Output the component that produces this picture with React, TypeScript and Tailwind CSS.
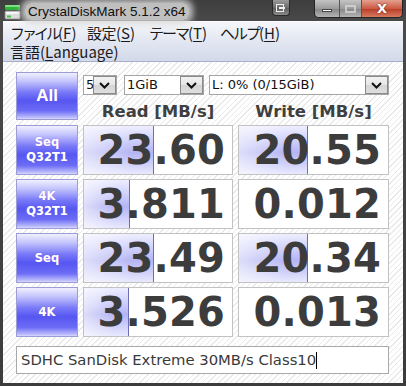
import React from "react";

const Chevron = () => (
  <svg width="11" height="7" viewBox="0 0 11 7">
    <path d="M1 1 L5.5 5.5 L10 1" fill="none" stroke="#111" strokeWidth="2" />
  </svg>
);

function Combo({ w, text, ml }: { w: string; text: string; ml: string }) {
  return (
    <div className={`h-[20px] border border-[#a5a5a5] bg-white flex items-stretch overflow-hidden ${w} ${ml}`}>
      <div className="flex-1 overflow-hidden whitespace-nowrap pl-[2px] text-[13px] leading-[18px] text-[#111] font-['DejaVu_Sans',sans-serif]">
        {text}
      </div>
      <div className="w-[23px] shrink-0 border border-[#8a8a8a] bg-[linear-gradient(to_bottom,#f2f2f2,#e6e6e6_50%,#d4d4d4_51%,#dedede)] flex items-center justify-center">
        <Chevron />
      </div>
    </div>
  );
}

const btnCls =
  "flex flex-col items-center justify-center border border-[#9c9cd6] bg-[linear-gradient(to_bottom,#f0f0ff_0%,#c4c4fc_18%,#7878f8_42%,#5656f2_60%,#6c6cf6_82%,#b8b8fc_96%,#d8d8ff_100%)] text-white font-bold [text-shadow:0_0_1px_#8a6ad8]";

function LabelBtn({ a, b }: { a: string; b?: string }) {
  return (
    <div className={`${btnCls} h-[50px] font-['DejaVu_Sans',sans-serif] text-[11.5px] leading-[15px]`}>
      <span>{a}</span>
      {b && <span>{b}</span>}
    </div>
  );
}

function Cell({ value, bar }: { value: string; bar: number }) {
  return (
    <div className="relative h-[50px] border border-[#c2c2c2] bg-white flex items-center justify-end pr-[7px] overflow-hidden">
      {bar > 0 && (
        <div
          className="absolute left-0 top-0 bottom-0 border-r border-[#6e6eb8] bg-[linear-gradient(to_right,rgba(255,255,255,0.55),rgba(255,255,255,0)_70%),linear-gradient(to_bottom,#eeeeff,#cacafa_35%,#b4b4f4_55%,#cacaf8_75%,#e8e8fe)]"
          style={{ width: bar }}
        />
      )}
      <span className="relative font-['DejaVu_Sans',sans-serif] font-bold text-[40px] leading-none text-[#3c3c3c] tracking-[0.2px]">
        {value}
      </span>
    </div>
  );
}

function U({ c }: { c: string }) {
  return <span className="underline underline-offset-[2px] decoration-1">{c}</span>;
}

function K({ t, tr }: { t: string; tr: string }) {
  return <span className={tr}>{t}</span>;
}

export default function App() {
  const rows = [
    { a: "Seq", b: "Q32T1", r: "23.60", rb: 70, w: "20.55", wb: 69 },
    { a: "4K", b: "Q32T1", r: "3.811", rb: 46, w: "0.012", wb: 0 },
    { a: "Seq", r: "23.49", rb: 70, w: "20.34", wb: 69 },
    { a: "4K", r: "3.526", rb: 45, w: "0.013", wb: 0 },
  ];
  return (
    <div className="w-[406px] h-[386px] flex flex-col bg-[linear-gradient(to_bottom,#3e3e3e,#4a4a4a_6%,#3c3c3c)] overflow-hidden">
      {/* Title bar */}
      <div className="h-[21px] shrink-0 flex items-start relative">
        <div className="flex items-center pl-[4px] pt-[3px]">
          <svg width="17" height="16" viewBox="0 0 17 16">
            <rect x="1" y="1" width="15" height="5" rx="1" fill="#2fb33a" />
            <rect x="1" y="1" width="15" height="2" rx="1" fill="#7be07f" />
            <rect x="1" y="7" width="15" height="8" rx="1" fill="#dcdcdc" stroke="#8a8a8a" strokeWidth="0.8" />
            <rect x="2" y="8" width="13" height="2" fill="#f6f6f6" />
            <rect x="3" y="11.5" width="4" height="2" fill="#3fc24a" />
          </svg>
          <span className="ml-[4px] px-[3px] h-[17px] text-[13.5px] leading-[17px] text-[#101010] font-['Liberation_Sans',sans-serif] bg-[rgba(214,214,214,0.85)] shadow-[0_0_6px_4px_rgba(214,214,214,0.85)] rounded-[6px]">
            CrystalDiskMark 5.1.2 x64
          </span>
        </div>
        <div className="flex-1" />
        <div className="mr-[24px] w-[18px] h-[16px] rounded-b-[4px] border border-t-0 border-[#2a2a2a] bg-[linear-gradient(to_bottom,#9a9a9a,#6e6e6e_50%,#5a5a5a_51%,#8a8a8a)] flex items-center justify-center">
          <svg width="10" height="8" viewBox="0 0 10 8">
            <rect x="0.5" y="0.5" width="7" height="7" fill="none" stroke="#f0f0f0" />
            <rect x="3" y="3" width="6" height="2" fill="#f0f0f0" />
          </svg>
        </div>
        <div className="mr-[3px] flex h-[18px] rounded-b-[5px] border border-t-0 border-[#252525] overflow-hidden">
          <div className="w-[25px] bg-[linear-gradient(to_bottom,#c4c4c4,#9c9c9c_50%,#848484_51%,#b4b4b4)] border-r border-[#555] flex items-center justify-center">
            <div className="w-[10px] h-[3px] bg-white border border-[#444] mt-[4px]" />
          </div>
          <div className="w-[22px] bg-[linear-gradient(to_bottom,#c4c4c4,#9c9c9c_50%,#848484_51%,#b4b4b4)] border-r border-[#555] flex items-center justify-center">
            <div className="w-[11px] h-[8px] border-2 border-[#dedede] opacity-70" />
          </div>
          <div className="w-[40px] bg-[linear-gradient(to_bottom,#e4a090,#cc5a44_50%,#b83a26_51%,#d87a60)] flex items-center justify-center">
            <span className="text-white font-bold text-[13px] leading-none font-['DejaVu_Sans',sans-serif] [text-shadow:0_0_2px_#5a1a10]">X</span>
          </div>
        </div>
      </div>

      {/* Body */}
      <div className="mx-[3px] mb-[3px] flex-1 flex flex-col bg-white">
        {/* Menu */}
        <div className="h-[41px] shrink-0 border-b border-[#a7b0c9] bg-[linear-gradient(to_bottom,#f6f7fb,#e4e8f2_45%,#d3d9ea)] border-t border-t-[#fdfdfd] text-[15px] leading-[19px] text-[#1a1a1a] font-['Noto_Sans_CJK_JP',sans-serif] px-[7px]">
          <div className="flex h-[20px] items-center">
            <span className="w-[77px] shrink-0 whitespace-nowrap"><K t="ファイル" tr="tracking-[-3px]" />(<U c="F" />)</span>
            <span className="w-[62px] shrink-0 whitespace-nowrap"><K t="設定" tr="tracking-[-0.5px]" />(<U c="S" />)</span>
            <span className="w-[71px] shrink-0 whitespace-nowrap"><K t="テーマ" tr="tracking-[-2px]" />(<U c="T" />)</span>
            <span className="whitespace-nowrap"><K t="ヘルプ" tr="tracking-[-2px]" />(<U c="H" />)</span>
          </div>
          <div className="flex h-[19px] items-center">
            <span>言語(<U c="L" />anguage)</span>
          </div>
        </div>

        {/* Content */}
        <div className="flex-1 pl-[13px] pt-[10px] bg-[repeating-linear-gradient(135deg,#ffffff_0px,#ffffff_3px,#e9e9e9_3px,#e9e9e9_4px)]">
          <div className="grid grid-cols-[62px_150px_151px] gap-x-[5px] gap-y-[4px]">
            <div className={`${btnCls} h-[48px] font-['Liberation_Sans',sans-serif] text-[17px]`}>All</div>
            <div className="col-span-2 flex flex-col">
              <div className="flex mt-[3px]">
                <Combo w="w-[34px]" ml="" text="5" />
                <Combo w="w-[80px]" ml="ml-[7px]" text="1GiB" />
                <Combo w="w-[180px]" ml="ml-[5px]" text="L: 0% (0/15GiB)" />
              </div>
              <div className="grid grid-cols-[150px_151px] gap-x-[5px] h-[26px] items-center pt-[5px] font-['DejaVu_Sans',sans-serif] font-bold text-[16.5px] text-[#3f3f3f]">
                <div className="text-center">Read [MB/s]</div>
                <div className="text-center">Write [MB/s]</div>
              </div>
            </div>
            {rows.map((r, i) => (
              <React.Fragment key={i}>
                <LabelBtn a={r.a} b={r.b} />
                <Cell value={r.r} bar={r.rb} />
                <Cell value={r.w} bar={r.wb} />
              </React.Fragment>
            ))}
          </div>
          <div className="mt-[9px] w-[373px] h-[28px] border border-[#a9a9a9] bg-white flex items-center pl-[4px] font-['DejaVu_Sans',sans-serif] text-[14.8px] text-[#3a3a3a]">
            <span>SDHC SanDisk Extreme 30MB/s Class10</span>
            <span className="w-[1px] h-[17px] bg-black" />
          </div>
        </div>
      </div>
    </div>
  );
}
